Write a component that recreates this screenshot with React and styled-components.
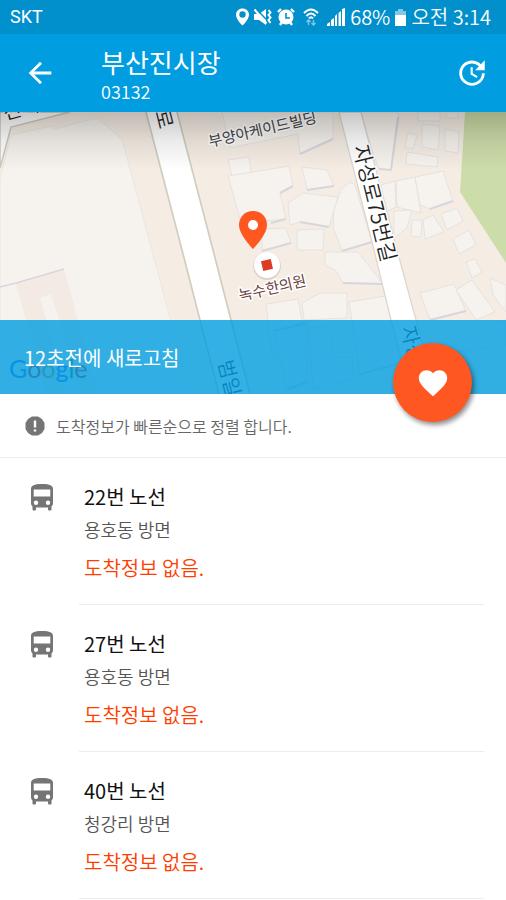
import React from 'react';
import styled, { createGlobalStyle } from 'styled-components';
import { MdArrowBack, MdUpdate, MdFavorite } from 'react-icons/md';

const GlobalStyle = createGlobalStyle`
  * { box-sizing: border-box; }
  body {
    margin: 0;
    background: #fff;
    color: #111;
    font-family: "Noto Sans CJK KR", "Noto Sans", sans-serif;
    font-weight: 350;
  }
  h1, h2, p, ul { margin: 0; padding: 0; font-weight: inherit; }
  button { border: 0; padding: 0; background: none; color: inherit; font: inherit; cursor: pointer; }
`;

const Screen = styled.div`
  height: 100vh;
  overflow: hidden;
  display: flex;
  flex-direction: column;
`;

const StatusBar = styled.div`
  flex: none;
  height: 34px;
  padding: 0 15px 0 10px;
  display: flex;
  align-items: center;
  justify-content: space-between;
  background: #0290cc;
  color: #fff;
  font-size: 20px;
  line-height: 36px;
`;

const Carrier = styled.span`
  font-family: Roboto, sans-serif;
  font-size: 18px;
  line-height: 34px;
  font-weight: 400;
`;

const StatusGroup = styled.div`
  display: flex;
  align-items: center;
  gap: 5px;
  svg { display: block; flex: none; }
`;

const AppBar = styled.header`
  flex: none;
  height: 78px;
  padding: 0 16px 0 22px;
  display: flex;
  align-items: center;
  background: #009de1;
  color: #fff;
`;

const IconButton = styled.button`
  width: 36px;
  height: 36px;
  display: grid;
  place-items: center;
`;

const TitleBlock = styled.div`
  flex: 1;
  padding: 4px 0 0 43px;
`;

const Title = styled.h1`
  font-size: 26px;
  line-height: 32px;
  font-weight: 400;
`;

const StopNumber = styled.p`
  font-size: 18px;
  line-height: 26px;
`;

const MapPanel = styled.section`
  flex: none;
  position: relative;
  min-height: 282px;
  display: flex;
  flex-direction: column;
  justify-content: flex-end;
`;

const MapArt = styled.svg`
  position: absolute;
  inset: 0;
  width: 100%;
  height: 100%;
  text {
    font-family: "Noto Sans CJK KR", sans-serif;
    font-weight: 400;
    fill: #444;
    stroke: #fff;
    stroke-width: 3px;
    stroke-linejoin: round;
    paint-order: stroke;
  }
  text.road { font-weight: 350; fill: #222; }
  text.place { fill: #6b423c; }
  text.logo { font-family: Lato, sans-serif; stroke: none; }
`;

const RefreshStrip = styled.p`
  position: relative;
  && { padding: 22px 24px 20px; }
  background: rgba(0, 157, 225, 0.8);
  color: #fff;
  font-size: 20px;
  line-height: 32px;
  && { font-weight: 400; }
`;

const FavoriteButton = styled.button`
  position: absolute;
  right: 34px;
  bottom: -28px;
  width: 79px;
  height: 79px;
  border-radius: 50%;
  display: grid;
  place-items: center;
  && { background: #ff5722; color: #fff; }
  box-shadow: 2px 3px 5px rgba(0, 0, 0, 0.45);
`;

const Notice = styled.div`
  flex: none;
  height: 64px;
  padding: 0 25px;
  display: flex;
  align-items: center;
  gap: 11px;
  border-bottom: 1px solid #ececec;
  color: #666;
  font-size: 16px;
  line-height: 24px;
`;

const RouteList = styled.ul`
  list-style: none;
`;

const RouteRow = styled.li`
  display: grid;
  grid-template-columns: 79px 1fr;
  padding-right: 22px;
`;

const BusArt = styled.svg`
  display: block;
  width: 22px;
  height: 27px;
  margin: 26px 0 0 31px;
`;

const RouteBody = styled.div`
  padding: 23px 0 14px 5px;
  border-bottom: 1px solid #ececec;
`;

const RouteName = styled.h2`
  font-size: 20px;
  line-height: 32px;
  && { font-weight: 400; }
  color: #111;
`;

const Direction = styled.p`
  font-size: 18px;
  line-height: 33px;
  color: #555;
`;

const Arrival = styled.p`
  font-size: 20px;
  line-height: 44px;
  color: #ff3d00;
`;

const buildings = [
  '222,112 333,112 333,139 300,154 298,134 230,148',
  '361,112 398,112 399,119 391,170 379,169 372,150',
  '228,160 249,157 251,173 232,176',
  '228,176 253,172 289,166 293,186 280,193 286,219 254,222 246,240 238,212',
  '302,167 327,170 334,186 307,190',
  '288,203 303,193 338,197 329,227 300,222 290,225',
  '334,210 341,189 350,182 355,185 372,242 342,251 333,227',
  '297,230 324,229 323,250 297,250',
  '262,229 286,228 291,243 262,251',
  '325,252 358,252 383,284 343,283 336,271 325,265',
  '418,112 440,112 440,121 418,121',
  '446,112 458,112 458,118 446,118',
  '422,124 440,126 438,150 422,147',
  '408,133 417,135 413,149 405,147',
  '445,129 459,132 458,153 445,151',
  '407,152 438,157 437,167 406,164',
  '381,185 395,181 396,207 386,212',
  '396,181 415,177 421,213 397,207',
  '415,177 443,171 453,201 430,209 420,205',
  '394,211 412,210 407,228 394,238',
  '412,220 422,220 421,237 411,236',
  '423,220 433,215 444,232 425,239',
  '441,214 457,208 463,221 447,230',
  '453,239 469,230 476,245 459,254',
  '466,262 475,259 482,272 472,278',
  '420,293 454,284 466,311 430,320',
  '456,290 472,280 495,312 476,320',
  '490,278 506,285 506,312 493,295',
  '266,304 298,299 302,320 304,350 272,355',
  '302,303 320,293 347,293 347,318 304,320',
  '349,302 391,295 408,361 360,374',
  '274,331 307,325 307,385 287,389',
  '309,328 330,326 334,358 352,357 353,379 313,389',
  '441,346 466,331 506,320 506,345 449,353',
];

function StreetMap() {
  return (
    <MapArt viewBox="0 112 506 282" preserveAspectRatio="xMidYMid slice" aria-hidden="true">
      <defs>
        <linearGradient id="barShade" x1="0" y1="0" x2="0" y2="1">
          <stop offset="0" stopColor="#000" stopOpacity="0.22" />
          <stop offset="0.5" stopColor="#000" stopOpacity="0.08" />
          <stop offset="1" stopColor="#000" stopOpacity="0" />
        </linearGradient>
      </defs>
      <rect y="112" width="506" height="282" fill="#f5ede4" />
      <path d="M0 112H70L11 127L0 168Z" fill="#fff" stroke="#cfcabd" strokeWidth="1.5" />
      <path d="M0 178L11 135L52 126L55 129L97 118L122 139L152 250L190 394H0Z" fill="#f6f3ee" stroke="#eae7e3" />
      <path d="M16 283L64 269L78 320L98 394H46Z" fill="#f4eae4" />
      <path d="M40 298L51 294L62 330L80 394H68Z" fill="#f6f3ee" />
      <path d="M0 287L16 283L64 269" fill="none" stroke="#d9d5de" strokeWidth="1.5" />
      <g fill="#f6f2ed" stroke="#e6e2e2" strokeWidth="1">
        {buildings.map((points) => <polygon key={points} points={points} />)}
      </g>
      <path d="M300 154L333 139M391 170L379 169M398 117L391 170M307 190L334 186M280 193L293 186M271 223L286 219M329 227L300 222M372 242L342 251M291 243L262 251M383 284L343 283M430 209L453 201M430 320L466 311M274 331L305 323M360 374L408 361M287 389L307 382" fill="none" stroke="#d8d5de" strokeWidth="2" />
      <path d="M465 112H506V263L460 192Z" fill="#cddda9" />
      <path d="M146 112L182 250L200 320L219 394H250L231 320L213 250L177 112Z" fill="#fff" />
      <path d="M146 112L182 250L200 320L219 394M177 112L213 250L231 320L250 394" fill="none" stroke="#d1cdbf" strokeWidth="1.7" />
      <path d="M339 112L374 250L391 320L410 394H435L416 320L397 250L361 112Z" fill="#fff" stroke="#ddd7cf" strokeWidth="1.3" />
      <text className="road" fontSize="20" transform="translate(5 120) rotate(-15)">진시장</text>
      <text className="road" fontSize="20" transform="translate(155 112) rotate(76)">로</text>
      <text fontSize="15" transform="translate(210 147) rotate(-13)">부양아케이드빌딩</text>
      <text className="road" fontSize="21" transform="translate(353 147) rotate(76)">자성로75번길</text>
      <text className="road" fontSize="20" transform="translate(218 362) rotate(76)">범일로</text>
      <text className="road" fontSize="20" transform="translate(401 328) rotate(76)">자성로</text>
      <text className="place" fontSize="15" transform="translate(240 301) rotate(-13)">녹수한의원</text>
      <circle cx="267" cy="266" r="14" fill="#000" opacity="0.1" />
      <circle cx="267" cy="265" r="13" fill="#fff" />
      <rect x="262" y="260" width="10" height="10" fill="#dd3b24" transform="rotate(-13 267 265)" />
      <path d="M253 211C245 211 239 217 239 225C239 235 253 249 253 249S267 235 267 225C267 217 261 211 253 211Z" fill="#ff5722" />
      <circle cx="253" cy="225" r="5" fill="#fff" />
      <text className="logo" x="9" y="378" fontSize="25">
        <tspan fill="#2468f2">G</tspan><tspan fill="#c5221f">o</tspan><tspan fill="#b99020">o</tspan><tspan fill="#2468f2">g</tspan><tspan fill="#188038">l</tspan><tspan fill="#c5221f">e</tspan>
      </text>
      <rect y="112" width="506" height="58" fill="url(#barShade)" />
    </MapArt>
  );
}

function LocationIcon() {
  return (
    <svg width="13" height="18" viewBox="0 0 13 18">
      <path fillRule="evenodd" d="M6.500 0.500C2.900 0.500 0 3.200 0 6.700C0 11.500 6.500 17.500 6.500 17.500S13 11.500 13 6.700C13 3.200 10.100 0.500 6.500 0.500ZM6.500 9.700A3.200 3.200 0 1 1 6.500 3.300A3.200 3.200 0 0 1 6.500 9.700Z" fill="#fff" />
    </svg>
  );
}

function MuteIcon() {
  return (
    <svg width="18" height="18" viewBox="0 0 18 18" fill="#fff">
      <path d="M0 6H5L12 1V17L5 12H0Z" />
      <path d="M2 1L14 13" stroke="#0290cc" strokeWidth="1.5" />
      <path d="M0.500 1.500L12.500 15.500" stroke="#fff" strokeWidth="2" />
      <path d="M14.500 2L16.500 4.500L14.500 7L16.500 9.500L14.500 12L16.500 15" fill="none" stroke="#fff" strokeWidth="2" />
    </svg>
  );
}

function AlarmIcon() {
  return (
    <svg width="18" height="18" viewBox="0 0 18 18" fill="none" stroke="#fff" strokeWidth="2">
      <circle cx="9" cy="9" r="7.5" fill="#fff" stroke="none" />
      <path d="M1 4L4 1M17 4L14 1M3 17L5 14M15 17L13 14" strokeWidth="2.4" />
      <path d="M9 5V10H13" stroke="#0290cc" strokeWidth="1.6" />
    </svg>
  );
}

function WifiIcon() {
  return (
    <svg width="22" height="18" viewBox="-3 0 22 18" fill="none" stroke="#fff" strokeWidth="2">
      <path d="M1 5Q8 -2 15 5M3.500 8Q8 3 12.500 8M6 10.500Q8 8 10 10.500" />
      <path d="M5.500 17V12M3.500 14L5.500 12L7.500 14M10.500 12V17M8.500 15L10.500 17L12.500 15" strokeWidth="1.3" opacity="0.5" />
    </svg>
  );
}

function SignalIcon() {
  return (
    <svg width="18" height="18" viewBox="0 0 18 18" fill="#fff">
      <path d="M0 18V16L3 14V18ZM4 18V12L7 10V18ZM8 18V8L10 6V18ZM11.500 18V5L14 3V18ZM15 18V1L18 0V18Z" />
    </svg>
  );
}

function BatteryIcon() {
  return (
    <svg width="11" height="17" viewBox="0 0 11 17" fill="#fff">
      <path d="M3 0H8V2H11V6H0V2H3Z" opacity="0.5" />
      <path d="M0 6H11V17H0Z" />
    </svg>
  );
}

function NoticeIcon() {
  return (
    <svg width="20" height="20" viewBox="0 0 20 20" aria-hidden="true">
      <path d="M7 0.500H13L17 3L19.500 7V13L17 17L13 19.500H7L3 17L0.500 13V7L3 3Z" fill="#757575" />
      <path d="M10 4.500V11.500M10 13.500V15.500" stroke="#fff" strokeWidth="2.4" />
    </svg>
  );
}

function BusIcon() {
  return (
    <BusArt viewBox="0 0 22 27" aria-hidden="true">
      <path fillRule="evenodd" fill="#757575" d="M0 5C0 1.500 3 0 11 0S22 1.500 22 5V19C22 20.500 21.500 21.500 20.500 22.500V25.500Q20.500 26.500 19.500 26.500H18Q17 26.500 17 25.500V23.500H5V25.500Q5 26.500 4 26.500H2.500Q1.500 26.500 1.500 25.500V22.500C0.500 21.500 0 20.500 0 19ZM2.700 5.500V12.500H19.300V5.500ZM5 16.500A2.200 2.200 0 1 0 5 20.900A2.200 2.200 0 0 0 5 16.500ZM17 16.500A2.200 2.200 0 1 0 17 20.900A2.200 2.200 0 0 0 17 16.500Z" />
    </BusArt>
  );
}

const routes = [
  { name: '22번 노선', direction: '용호동 방면' },
  { name: '27번 노선', direction: '용호동 방면' },
  { name: '40번 노선', direction: '청강리 방면' },
];

export default function App() {
  return (
    <Screen>
      <GlobalStyle />
      <StatusBar>
        <Carrier>SKT</Carrier>
        <StatusGroup>
          <LocationIcon />
          <MuteIcon />
          <AlarmIcon />
          <WifiIcon />
          <SignalIcon />
          <span>68%</span>
          <BatteryIcon />
          <span>오전 3:14</span>
        </StatusGroup>
      </StatusBar>
      <AppBar>
        <IconButton aria-label="뒤로"><MdArrowBack size={34} /></IconButton>
        <TitleBlock>
          <Title>부산진시장</Title>
          <StopNumber>03132</StopNumber>
        </TitleBlock>
        <IconButton aria-label="새로고침"><MdUpdate size={34} /></IconButton>
      </AppBar>
      <MapPanel>
        <StreetMap />
        <RefreshStrip>12초전에 새로고침</RefreshStrip>
        <FavoriteButton aria-label="즐겨찾기"><MdFavorite size={34} /></FavoriteButton>
      </MapPanel>
      <Notice>
        <NoticeIcon />
        <p>도착정보가 빠른순으로 정렬 합니다.</p>
      </Notice>
      <RouteList>
        {routes.map((route) => (
          <RouteRow key={route.name}>
            <BusIcon />
            <RouteBody>
              <RouteName>{route.name}</RouteName>
              <Direction>{route.direction}</Direction>
              <Arrival>도착정보 없음.</Arrival>
            </RouteBody>
          </RouteRow>
        ))}
      </RouteList>
    </Screen>
  );
}
